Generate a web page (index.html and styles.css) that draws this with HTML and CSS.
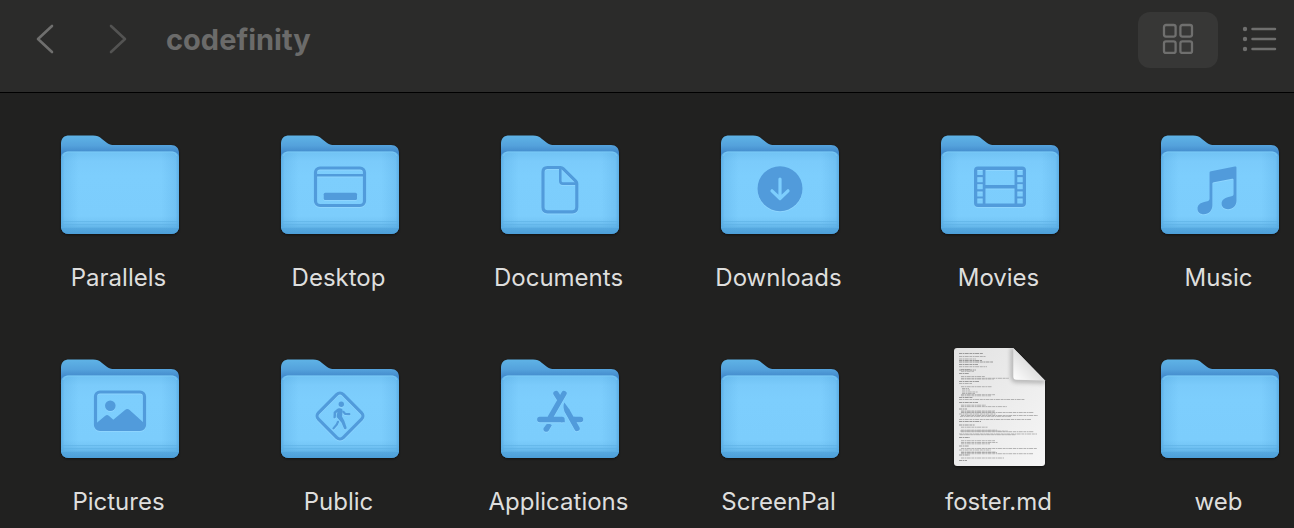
FILE: index.html
```html
<!DOCTYPE html>
<html lang="en">
<head>
<meta charset="utf-8">
<title>codefinity</title>
<link rel="stylesheet" href="styles.css">
</head>
<body>
<svg class="defs" aria-hidden="true">
  <defs>
    <linearGradient id="back" x1="0" y1="0" x2="0" y2="1">
      <stop offset="0" stop-color="#5fb3e6"/>
      <stop offset="0.1" stop-color="#54a2dc"/>
      <stop offset="0.18" stop-color="#4188ca"/>
      <stop offset="1" stop-color="#4188ca"/>
    </linearGradient>
    <linearGradient id="front" x1="0" y1="0" x2="0" y2="1">
      <stop offset="0" stop-color="#70c2f3"/>
      <stop offset="0.12" stop-color="#7bcbfb"/>
      <stop offset="0.3" stop-color="#7dcefd"/>
      <stop offset="0.78" stop-color="#7ccdfc"/>
      <stop offset="0.84" stop-color="#76c7f7"/>
      <stop offset="0.92" stop-color="#64b6ea"/>
      <stop offset="0.93" stop-color="#57a9e0"/>
      <stop offset="1" stop-color="#4c9fd8"/>
    </linearGradient>
    <linearGradient id="sides" x1="0" y1="0" x2="1" y2="0">
      <stop offset="0" stop-color="#4fa2dc" stop-opacity="0.7"/>
      <stop offset="0.03" stop-color="#4fa2dc" stop-opacity="0.25"/>
      <stop offset="0.15" stop-color="#4fa2dc" stop-opacity="0"/>
      <stop offset="0.85" stop-color="#4fa2dc" stop-opacity="0"/>
      <stop offset="0.97" stop-color="#4fa2dc" stop-opacity="0.25"/>
      <stop offset="1" stop-color="#4fa2dc" stop-opacity="0.7"/>
    </linearGradient>
    <linearGradient id="paper" x1="0" y1="0" x2="1" y2="1">
      <stop offset="0" stop-color="#e2e2e2"/>
      <stop offset="1" stop-color="#f6f6f6"/>
    </linearGradient>
    <linearGradient id="fold" x1="0" y1="1" x2="0.6" y2="0.4">
      <stop offset="0" stop-color="#ffffff"/>
      <stop offset="1" stop-color="#d9d9d9"/>
    </linearGradient>
    <clipPath id="page-shape"><path d="M21 5H77.300L109 37.500V120a3 3 0 0 1-3 3H21a3 3 0 0 1-3-3V8a3 3 0 0 1 3-3z"/></clipPath>
    <symbol id="folder" viewBox="0 0 128 128">
      <path fill="url(#back)" d="M5 107V25c0-6 3-8.500 8.500-8.500H37c4 0 6 1 9 3.400l4.500 3.600c2.500 2 4.500 2.600 8 2.600H115c5 0 8 3 8 8v73c0 5-3 8-8 8H13c-5 0-8-3-8-8z"/>
      <path fill="url(#front)" d="M5 40.500C5 35 7.500 32.500 13 32.500H115c5.500 0 8 2.500 8 8V107c0 5-3 8-8 8H13c-5 0-8-3-8-8z"/>
      <path fill="url(#sides)" d="M5 40.500C5 35 7.500 32.500 13 32.500H115c5.500 0 8 2.500 8 8V107c0 5-3 8-8 8H13c-5 0-8-3-8-8z"/>
      <path stroke="#5eb0e5" stroke-opacity="0.6" stroke-width="1" d="M5 102.500H123M5 105.500H123M5 108.500H123"/>
      <path fill="none" stroke="#8ad3fc" stroke-opacity="0.5" d="M7 37c1.500-3 3-4 6-4H115c3 0 4.500 1 6 4"/>
    </symbol>
  </defs>
</svg>

<header class="toolbar">
  <nav class="history">
    <button class="nav-button" type="button" aria-label="Back">
      <svg class="chevron" viewBox="0 0 24 32"><path d="M19 2 5 15l14 13"/></svg>
    </button>
    <button class="nav-button nav-button-dim" type="button" aria-label="Forward">
      <svg class="chevron" viewBox="0 0 24 32"><path d="M5 2l14 13L5 28"/></svg>
    </button>
  </nav>
  <h1 class="title">codefinity</h1>
  <div class="views">
    <button class="view-button view-button-active" type="button" aria-label="Icon view" aria-pressed="true">
      <svg class="view-icon" viewBox="0 0 36 36"><g fill="none" stroke="currentColor" stroke-width="2.300"><rect x="4" y="3" width="11.600" height="11.600" rx="2"/><rect x="20.400" y="3" width="11.600" height="11.600" rx="2"/><rect x="4" y="19.300" width="11.600" height="11.600" rx="2"/><rect x="20.400" y="19.300" width="11.600" height="11.600" rx="2"/></g></svg>
    </button>
    <button class="view-button view-button-end" type="button" aria-label="List view" aria-pressed="false">
      <svg class="view-icon" viewBox="0 0 36 36"><g fill="currentColor"><circle cx="3" cy="7" r="2.200"/><circle cx="3" cy="17" r="2.200"/><circle cx="3" cy="27" r="2.200"/></g><path stroke="currentColor" stroke-width="2.500" stroke-linecap="round" d="M10.500 7H33M10.500 17H33M10.500 27H33"/></svg>
    </button>
  </div>
</header>

<main class="content">
  <ul class="files">
    <li><a class="file" href="#parallels">
      <svg class="icon" viewBox="0 0 128 128"><use href="#folder"/></svg>
      <span class="label">Parallels</span></a></li>
    <li><a class="file" href="#desktop">
      <svg class="icon" viewBox="0 0 128 128"><use href="#folder"/>
        <g class="glyph"><rect class="line" x="39.500" y="49" width="49" height="37.500" rx="4.500"/><path class="line thin" d="M39.500 56.200H88.500"/><rect class="solid" x="47.700" y="73.700" width="33.300" height="7.300" rx="1.500"/></g></svg>
      <span class="label">Desktop</span></a></li>
    <li><a class="file" href="#documents">
      <svg class="icon" viewBox="0 0 128 128"><use href="#folder"/>
        <g class="glyph"><path class="line" d="M51.500 48.500H64.500c1.200 0 1.800.3 2.600 1.100L79.700 62.200c.8.800 1.100 1.400 1.100 2.600V88.300c0 3-1.500 4.500-4.500 4.500H51.500c-3 0-4.500-1.500-4.500-4.500V53c0-3 1.500-4.500 4.500-4.500z"/><path class="line thin" d="M64.300 49V62c0 1.800.8 2.600 2.600 2.600H80.500"/></g></svg>
      <span class="label">Documents</span></a></li>
    <li><a class="file" href="#downloads">
      <svg class="icon" viewBox="0 0 128 128"><use href="#folder"/>
        <g class="glyph"><circle class="solid" cx="64" cy="69.700" r="22.500"/></g><path class="arrow" d="M64 60V79M56 71.800l8 7.700 8-7.700"/></svg>
      <span class="label">Downloads</span></a></li>
    <li><a class="file" href="#movies">
      <svg class="icon" viewBox="0 0 128 128"><use href="#folder"/>
        <g class="glyph"><path class="solid" fill-rule="evenodd" d="M42 47.500H86a4 4 0 0 1 4 4V84a4 4 0 0 1-4 4H42a4 4 0 0 1-4-4V51.500a4 4 0 0 1 4-4zM41.300 51v5h5.400v-5zm0 7.200v5h5.400v-5zm0 7.100v5h5.400v-5zm0 7.100v5h5.400v-5zm0 7.200v5h5.400v-5zM81.300 51v5h5.400v-5zm0 7.200v5h5.400v-5zm0 7.100v5h5.400v-5zm0 7.100v5h5.400v-5zm0 7.200v5h5.400v-5zM49.500 51V66H78.500V51zM49.500 69.500v15H78.500v-15z"/></g></svg>
      <span class="label">Movies</span></a></li>
    <li><a class="file" href="#music">
      <svg class="icon" viewBox="0 0 128 128"><use href="#folder"/>
        <g class="glyph"><path class="solid" d="M55 52.300 78.800 47.600c1.100-.2 1.700.3 1.700 1.400V81.500c0 5.200-3.500 8.700-8.500 8.700-3.800 0-6.400-2.200-6.400-5.400 0-3.600 2.600-6 6.900-6.900l3-.6c1.400-.3 2-1 2-2.400V60.800c0-.9-.5-1.300-1.400-1.100L57.800 63.300c-1 .2-1.400.7-1.400 1.600V86c0 5.500-3.400 9.200-8.600 9.200-3.800 0-6.300-2.200-6.300-5.500 0-3.500 2.400-5.900 6.700-6.800l3-.6c1.600-.3 2.300-1.100 2.300-2.700V54.200c0-1.100.4-1.700 1.500-1.900z"/></g></svg>
      <span class="label">Music</span></a></li>
    <li><a class="file" href="#pictures">
      <svg class="icon" viewBox="0 0 128 128"><use href="#folder"/>
        <g class="glyph"><rect class="line" x="39.500" y="49" width="49" height="37.500" rx="4.500"/><circle class="solid" cx="54.300" cy="62.700" r="5.300"/><path class="solid" d="M40 80.500 49.300 72.700c1.200-1 2.300-1 3.500 0l4.500 4 11.700-9.800c1.600-1.200 3-1.200 4.600 0L88 80v4c0 2-1 3-3 3H43c-2 0-3-1-3-3z"/></g></svg>
      <span class="label">Pictures</span></a></li>
    <li><a class="file" href="#public">
      <svg class="icon" viewBox="0 0 128 128"><use href="#folder"/>
        <g class="glyph"><rect class="line" x="46.500" y="55.500" width="35" height="35" rx="4.500" transform="rotate(45 64 73)"/><circle class="solid" cx="65.300" cy="61.300" r="2.700"/><path class="solid" d="M60.500 66.600c1.400-1.400 4-1.700 5.400-.6.800.7.800 1.700.6 3L66 73.500l2.300 4.300 2.200 6.400c.6 1.900-1.600 2.800-2.500 1.200l-2.600-6-3.900-4.400c-.8-.9-.9-1.700-.7-2.800l.6-3.500-1.200 1.600-.4 4c-.2 1.500-2.400 1.400-2.400-.1l.2-4.600c0-.5.300-.8.600-1.100z"/><path class="line limb" d="M67.300 68.800 69.300 71l4 .2M62 78.800l-1.200 2.700-3.300 3.900"/></g></svg>
      <span class="label">Public</span></a></li>
    <li><a class="file" href="#applications">
      <svg class="icon" viewBox="0 0 128 128"><use href="#folder"/>
        <g class="glyph"><path class="line thick" d="M68 50.500 54.500 74M60 50.500l3.500 5.500M43.800 76.500H66M79 76.500h5.500M71.500 68.500 81 85.500"/><path class="solid" d="M68.300 59.500 73.800 67l-4.700 2.700c-1.700-3.500-2.200-6.900-.8-10.200zM50.500 81.300c2.500-.8 4.300-.2 5.300 1l-2.900 5c-1.900 3.200-6.700 1-5.200-2.200zM65 73.800c2.400 1.200 3.600 3 4 5.400H65zM76 73.800h3v5.400z"/></g></svg>
      <span class="label">Applications</span></a></li>
    <li><a class="file" href="#screenpal">
      <svg class="icon" viewBox="0 0 128 128"><use href="#folder"/></svg>
      <span class="label">ScreenPal</span></a></li>
    <li><a class="file" href="#foster">
      <svg class="icon" viewBox="0 0 128 128">
        <path fill="url(#paper)" d="M21 5H77.300L109 37.500V120a3 3 0 0 1-3 3H21a3 3 0 0 1-3-3V8a3 3 0 0 1 3-3z"/>
        <path class="print heading" d="M23 10.500H47M23 17.500H46M23 19H57M23 21.500H42M23 27H40M23 30.500H33M23 38.500H43M23 54.500H37M23 59.500H42M23 66H31M23 78.500H45M23 82H39M23 94.500H34M23 103H33M23 112H34M23 117.500H31"/>
        <path class="print" d="M23 13.500H50M23 16H40M23 23.700H51M25 26.500H34M25 28.300H38M25 33.500H49M25 35.300H73M23 40.500H36M25 43.700H56M26 45.500H33M26 47H34M26 49H42M26 50.500H39M25 51.700H59M23 56.500H89M25 62.200H50M25 63.600H71M25 68H59M25 69.500H98M23 71H60M25 72.500H102M23 76.500H95M25 84.200H52M25 87.200H61M25 88.700H98M23 91H101M25 97.700H59M25 99.500H62M25 100.800H54M25 105.500H101M23 107H55M25 109.500H61M25 110.700H97M25 115H68"/>
        <path class="print strong" d="M25 36.100H58M25 52.800H55M25 69H58M24 73.500H75M24 88H72M24 91.700H80M25 109H60"/>
        <g clip-path="url(#page-shape)"><path class="fold-shadow" d="M77.300 5V34a3 3 0 0 0 3 3L109 38"/></g>
        <path fill="url(#fold)" d="M77.300 5V33.700a3 3 0 0 0 3 3L109 37.500z"/>
      </svg>
      <span class="label">foster.md</span></a></li>
    <li><a class="file" href="#web">
      <svg class="icon" viewBox="0 0 128 128"><use href="#folder"/></svg>
      <span class="label">web</span></a></li>
  </ul>
</main>
</body>
</html>
```
FILE: styles.css
```css
* { box-sizing: border-box; }

body {
  margin: 0;
  min-height: 100vh;
  background: #212120;
  color: #dededd;
  font-family: Inter, "Liberation Sans", sans-serif;
  overflow: hidden;
}

.defs { position: absolute; width: 0; height: 0; }

.toolbar {
  display: flex;
  align-items: center;
  gap: 24px;
  padding: 12px 0 24px 21px;
  background: #2b2b2a;
  border-bottom: 1px solid #000;
}

.history { display: flex; gap: 25px; }

button {
  display: flex;
  align-items: center;
  justify-content: center;
  padding: 0;
  border: 0;
  background: none;
}

.nav-button { width: 48px; height: 56px; color: #6f6f6e; }
.nav-button-dim { color: #535352; }

.chevron {
  width: 24px;
  height: 32px;
  fill: none;
  stroke: currentColor;
  stroke-width: 2.6;
  stroke-linecap: round;
  stroke-linejoin: round;
}

.title {
  flex: 1;
  margin: 0;
  color: #6b6b6a;
  font-size: 29px;
  line-height: 40px;
  font-weight: 700;
}

.views { display: flex; gap: 8px; }

.view-button {
  width: 80px;
  height: 56px;
  border-radius: 12px;
  color: #6f6f6e;
}
.view-button-active { background: #373736; }
.view-button-end { width: 68px; }
.view-icon { width: 36px; height: 36px; }

.content { overflow: hidden; padding: 26px 0 12px 10px; }

.files {
  display: grid;
  grid-template-columns: repeat(6, 220px);
  row-gap: 50px;
  margin: 0;
  padding: 0;
  list-style: none;
}

.file {
  display: flex;
  flex-direction: column;
  align-items: center;
  gap: 16px;
  color: inherit;
  text-decoration: none;
}

.icon { width: 128px; height: 128px; filter: drop-shadow(0 1px 1px rgba(0, 0, 0, 0.5)); }

.label {
  padding-right: 3px;
  font-size: 24px;
  line-height: 30px;
  font-weight: 400;
}

.glyph { filter: drop-shadow(0 1px 0 rgba(150, 216, 255, 0.7)); }
.solid { fill: #519bdb; }
.line { fill: none; stroke: #519bdb; stroke-width: 3.2; }
.thin { stroke-width: 2.6; }
.limb { stroke-width: 2.2; stroke-linecap: round; stroke-linejoin: round; }
.thick { stroke-width: 5.4; stroke-linecap: round; }

.arrow {
  fill: none;
  stroke: #7dcefd;
  stroke-width: 3.2;
  stroke-linecap: round;
  stroke-linejoin: round;
}

.print { fill: none; stroke: #8a8a8a; stroke-width: 0.6; stroke-dasharray: 3 0.6 1.6 0.5 4 0.7; }
.heading { stroke: #666; }
.strong { stroke: #999; }
.fold-shadow { fill: none; stroke: #000; stroke-opacity: 0.25; stroke-width: 5; filter: blur(2px); }
```
